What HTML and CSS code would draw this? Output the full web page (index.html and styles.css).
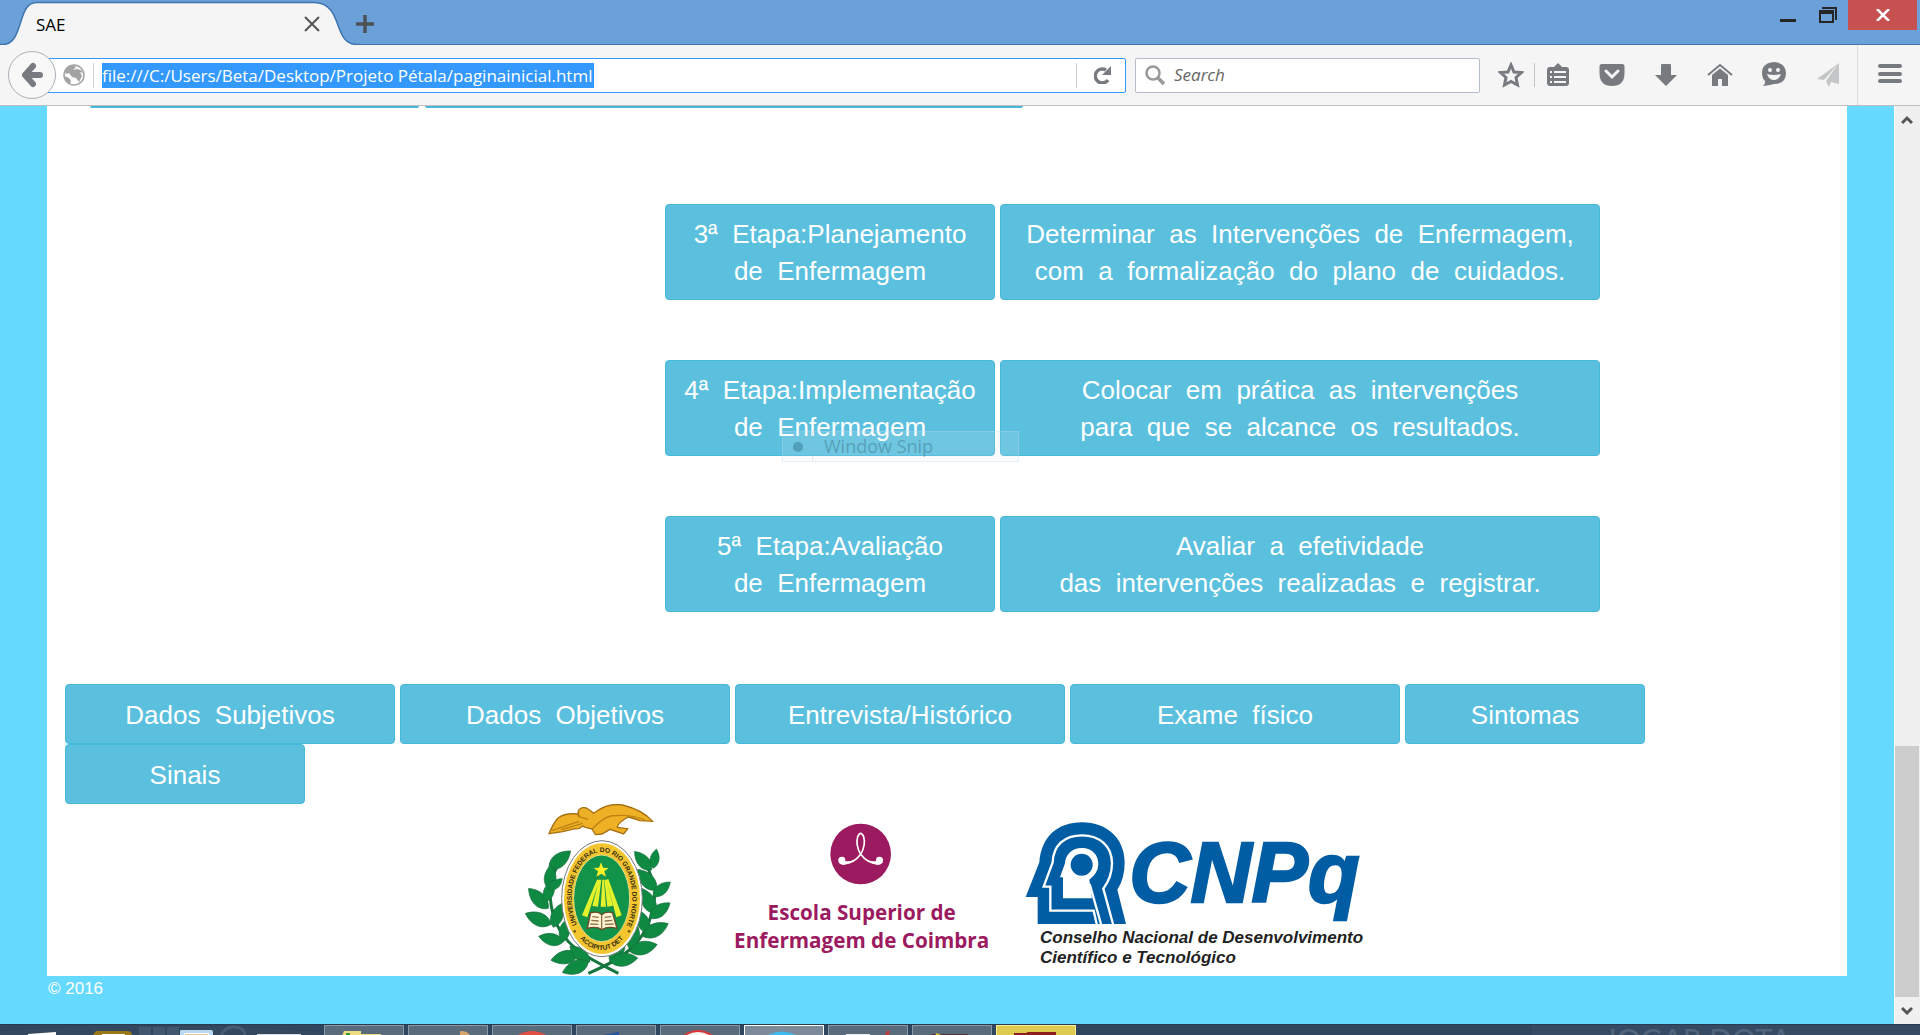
FILE: index.html
```html
<!DOCTYPE html>
<html lang="pt">
<head>
<meta charset="utf-8">
<title>SAE</title>
<link rel="stylesheet" href="styles.css">
</head>
<body>
<header class="titlebar">
  <div class="tab">
    <svg class="tab-shape" width="360" height="45" viewBox="0 0 360 45"><path d="M0 44.5H3C24 44 17 3 36 2.500H314C344 3 332 43 356 44.500V46H0Z" fill="#f5f5f5"/><path d="M0 44.500H3C24 44 17 3 36 2.500H314C344 3 332 43 356 44.500H360" fill="none" stroke="#3f74ad" stroke-width="1.500"/></svg>
    <span class="tab-title">SAE</span>
    <button class="plain tab-close" aria-label="Close tab"><svg width="16" height="16" viewBox="0 0 16 16"><path d="M1 1L15 15M15 1L1 15" stroke="#555" stroke-width="2"/></svg></button>
  </div>
  <button class="plain new-tab" aria-label="New tab"><svg width="18" height="18" viewBox="0 0 18 18"><path d="M9 0V18M0 9H18" stroke="#4d5257" stroke-width="3.500"/></svg></button>
  <div class="window-buttons">
    <button class="plain" aria-label="Minimize"><svg width="16" height="30" viewBox="0 0 16 30"><path d="M0 19H16V22H0Z" fill="#262626"/></svg></button>
    <button class="plain" aria-label="Restore"><svg width="18" height="30" viewBox="0 0 18 30"><path d="M3 7H18V20H16V9H3Z" fill="#262626"/><path d="M0 10H15V23H0ZM2 14V21H13V14Z" fill="#262626" fill-rule="evenodd"/></svg></button>
    <button class="plain window-close" aria-label="Close"><svg width="14" height="12" viewBox="0 0 14 12"><path d="M1 0L13 12M13 0L1 12" stroke="#fff" stroke-width="2.500"/></svg></button>
  </div>
</header>

<nav class="toolbar">
  <button class="plain back" aria-label="Back"><svg width="24" height="26" viewBox="0 0 24 26"><path d="M13 4L5 13L13 22M6 13H20" fill="none" stroke="#777b80" stroke-width="6" stroke-linejoin="round" stroke-linecap="round"/></svg></button>
  <div class="urlbar">
    <svg width="22" height="22" viewBox="0 0 22 22"><circle cx="11" cy="11" r="10" fill="#fff" stroke="#a3a3a3" stroke-width="1.500"/><path d="M2 7Q5 1 11 1L13 3L10 6L14 5L18 6L20 9L17 8L19 12L16 18L13 14L9 13L6 9L3 10ZM1 12L6 14L8 17L7 20Q2 17 1 12Z" fill="#a3a3a3"/></svg>
    <i class="url-divider"></i>
    <input class="url-text" aria-label="Address" value="file:///C:/Users/Beta/Desktop/Projeto Pétala/paginainicial.html">
    <button class="plain reload" aria-label="Reload"><svg width="18" height="18" viewBox="0 0 18 18"><path d="M14 14A7 7 0 1 1 12 4" fill="none" stroke="#777b80" stroke-width="3.500"/><path d="M17 0V9H8Z" fill="#777b80"/></svg></button>
  </div>
  <div class="searchbar">
    <svg width="21" height="21" viewBox="0 0 21 21"><circle cx="8" cy="8" r="6.500" fill="none" stroke="#999" stroke-width="2.500"/><path d="M12 12L19 19" stroke="#999" stroke-width="3.500"/></svg>
    <input class="search-text" aria-label="Search" placeholder="Search">
  </div>
  <div class="tools">
    <button class="plain" aria-label="Bookmark"><svg viewBox="0 0 26 26"><path d="M13 3L16 10L23.500 10.500L18 15.500L19.500 23L13 19.500L6.500 23L8 15.500L2.500 10.500L10 10Z" fill="none" stroke="#777b80" stroke-width="3"/></svg></button>
    <button class="plain" aria-label="Bookmarks list"><svg viewBox="0 0 26 26"><path d="M5 5H9L13 1L17 5H21Q24 5 24 8V21Q24 24 21 24H5Q2 24 2 21V8Q2 5 5 5Z" fill="#777b80"/><path d="M9 9H21V11H9ZM9 14H21V16H9ZM9 19H21V21H9ZM5 9H7V11H5ZM5 14H7V16H5ZM5 19H7V21H5Z" fill="#f5f5f5"/></svg></button>
    <button class="plain" aria-label="Pocket"><svg viewBox="0 0 26 26"><path d="M3 2H23Q25.500 2 25.500 4V11Q25.500 24 13 24Q.5 24 .5 11V4Q.5 2 3 2Z" fill="#777b80"/><path d="M7 9L13 15L19 9" fill="none" stroke="#f5f5f5" stroke-width="3" stroke-linecap="round"/></svg></button>
    <button class="plain" aria-label="Downloads"><svg viewBox="0 0 26 26"><path d="M8 3Q8 2 9 2H17Q18 2 18 3V13H24L13 24L2 13H8Z" fill="#777b80"/></svg></button>
    <button class="plain" aria-label="Home"><svg viewBox="0 0 26 26"><path d="M1 13L13 3L25 13" fill="none" stroke="#777b80" stroke-width="2"/><path d="M5 13L13 6.500L21 13V24H15V17H11V24H5Z" fill="#777b80"/></svg></button>
    <button class="plain" aria-label="Chat"><svg viewBox="0 0 26 26"><path d="M13 0Q25 1 25 11Q25 22 13 22Q10 23 2 24Q5 21 4 19Q1 16 1 11Q1 1 13 0Z" fill="#777b80"/><circle cx="9" cy="8" r="2" fill="#f5f5f5"/><circle cx="17" cy="8" r="2" fill="#f5f5f5"/><path d="M6 12Q13 14 20 12Q18 18 13 18Q8 18 6 12Z" fill="#f5f5f5"/></svg></button>
    <button class="plain" aria-label="Share"><svg viewBox="0 0 26 26"><path d="M24 1L2 17L9 18ZM24 1L11 19L14 25L16 20L24 22Z" fill="#c3c5c7"/></svg></button>
    <button class="plain menu" aria-label="Menu"><svg viewBox="0 0 26 26"><path d="M3 4H23M3 12H23M3 19H23" stroke="#777b80" stroke-width="4" stroke-linecap="round"/></svg></button>
  </div>
</nav>

<div class="viewport">
  <div class="page">
    <main class="sheet">
      <div class="cut-row"><i class="cut-label"></i><i class="cut-text"></i></div>
      <div class="steps">
        <div class="step"><button class="btn stage">3ª&nbsp; Etapa:Planejamento<br>de&nbsp; Enfermagem</button><button class="btn detail">Determinar&nbsp; as&nbsp; Intervenções&nbsp; de&nbsp; Enfermagem,<br>com&nbsp; a&nbsp; formalização&nbsp; do&nbsp; plano&nbsp; de&nbsp; cuidados.</button></div>
        <div class="step"><button class="btn stage">4ª&nbsp; Etapa:Implementação<br>de&nbsp; Enfermagem</button><button class="btn detail">Colocar&nbsp; em&nbsp; prática&nbsp; as&nbsp; intervenções<br>para&nbsp; que&nbsp; se&nbsp; alcance&nbsp; os&nbsp; resultados.</button>
          <div class="snip"><span class="snip-dot"></span><span class="snip-label">Window Snip</span></div>
        </div>
        <div class="step"><button class="btn stage">5ª&nbsp; Etapa:Avaliação<br>de&nbsp; Enfermagem</button><button class="btn detail">Avaliar&nbsp; a&nbsp; efetividade<br>das&nbsp; intervenções&nbsp; realizadas&nbsp; e&nbsp; registrar.</button></div>
      </div>
      <div class="topics">
        <button class="btn stage">Dados&nbsp; Subjetivos</button>
        <button class="btn stage">Dados&nbsp; Objetivos</button>
        <button class="btn stage">Entrevista/Histórico</button>
        <button class="btn stage">Exame&nbsp; físico</button>
        <button class="btn short">Sintomas</button>
        <button class="btn short">Sinais</button>
      </div>
      <div class="logos">
        <svg class="crest" width="180" height="172" viewBox="0 42 540 516" role="img" aria-label="Universidade Federal do Rio Grande do Norte">
          <defs>
            <path id="leaf" d="M0 0C14 -26 50 -32 84 -4C56 22 22 24 0 0Z"/>
            <path id="arc" d="M201 404A91 139 0 1 1 351 404"/>
            <path id="arc2" d="M200 432A104 156 0 0 0 350 432"/>
          </defs>
          <g fill="none" stroke="#17763d" stroke-width="9"><path d="M325 550C230 500 120 460 120 300Q125 240 170 190M235 550C330 510 430 460 435 300Q420 230 385 190"/></g>
          <g fill="#0f8a43" stroke="#176b3c" stroke-width="2">
            <use href="#leaf" transform="translate(118 238) rotate(-38)"/>
            <use href="#leaf" transform="translate(120 300) rotate(-85) scale(.9)"/>
            <use href="#leaf" transform="translate(115 355) rotate(-132)"/>
            <use href="#leaf" transform="translate(108 335) rotate(-70) scale(.8)"/>
            <use href="#leaf" transform="translate(124 402) rotate(-155)"/>
            <use href="#leaf" transform="translate(130 412) rotate(-68) scale(.9)"/>
            <use href="#leaf" transform="translate(160 455) rotate(-165) scale(.9)"/>
            <use href="#leaf" transform="translate(160 455) rotate(-80) scale(.8)"/>
            <use href="#leaf" transform="translate(205 492) rotate(170)"/>
            <use href="#leaf" transform="translate(240 515) rotate(-140) scale(.9)"/>
            <use href="#leaf" transform="translate(235 515) rotate(160)"/>
            <use href="#leaf" transform="translate(120 300) rotate(-40) scale(.6)"/>
            <use href="#leaf" transform="translate(425 240) rotate(-130) scale(.9)"/>
            <use href="#leaf" transform="translate(430 235) rotate(-78) scale(.7)"/>
            <use href="#leaf" transform="translate(440 300) rotate(-130)"/>
            <use href="#leaf" transform="translate(430 320) rotate(-38) scale(.8)"/>
            <use href="#leaf" transform="translate(435 370) rotate(-115)"/>
            <use href="#leaf" transform="translate(420 385) rotate(-35) scale(.9)"/>
            <use href="#leaf" transform="translate(415 430) rotate(-110) scale(.9)"/>
            <use href="#leaf" transform="translate(400 440) rotate(-25)"/>
            <use href="#leaf" transform="translate(360 478) rotate(-70) scale(.9)"/>
            <use href="#leaf" transform="translate(360 485) rotate(-12)"/>
            <use href="#leaf" transform="translate(300 515) rotate(-50) scale(.9)"/>
            <use href="#leaf" transform="translate(300 515) rotate(-5)"/>
          </g>
          <ellipse cx="276" cy="326" rx="121" ry="174" fill="#fff" stroke="#777" stroke-width="3"/>
          <ellipse cx="276" cy="326" rx="114" ry="166" fill="#f3c62f"/>
          <ellipse cx="275" cy="325" rx="84" ry="130" fill="#12934a" stroke="#e5d98d" stroke-width="3"/>
          <g class="crest-text"><text><textPath href="#arc">UNIVERSIDADE FEDERAL DO RIO GRANDE DO NORTE</textPath></text><text class="crest-motto"><textPath href="#arc2" startOffset="50%">ACCIPITUT DET</textPath></text></g>
          <circle cx="194" cy="424" r="4" fill="#725d16"/><circle cx="357" cy="424" r="4" fill="#725d16"/>
          <path d="M261 269L216 376L232 382L268 269ZM267 269L247 348L264 350L274 269ZM277 269L272 350H288L282 269ZM283 269L292 350L309 347L289 269ZM289 269L319 382L335 376L295 267Z" fill="#e2f12b"/>
          <path d="M273 217L279 233L296 234L283 244L288 260L274 251L259 260L264 244L251 234L267 233Z" fill="#fff028"/>
          <path d="M232 415L242 368Q265 363 275 374Q288 363 307 368L321 415Q292 408 276 419Q260 408 232 415Z" fill="#fff3d5" stroke="#6a4b25" stroke-width="4"/><path d="M275 375V416M247 380L266 382M244 391L266 393M241 402L265 403M284 382L303 380M284 393L307 391M285 403L311 402" stroke="#927145" stroke-width="4"/>
          <path d="M204 65Q210 49 229 54Q242 61 251 70Q292 37 338 45Q398 60 428 94L390 92Q375 86 354 81Q322 100 322 112L353 116L341 132L300 118L276 132L256 134L246 117Q222 112 218 108Q206 119 195 116L158 125L117 131Q128 103 144 84Q165 68 204 72L207 81Z" fill="#eeb125" stroke="#a77013" stroke-width="4"/><path d="M246 117Q280 82 303 78Q360 71 405 90M125 122L207 94M154 119L218 100M235 88L207 80" fill="none" stroke="#bd8114" stroke-width="4"/>
        </svg>
        <svg width="300" height="172" viewBox="0 12 900 516" role="img" aria-label="Escola Superior de Enfermagem de Coimbra">
          <circle cx="452" cy="162" r="91" fill="#9c1a60"/>
          <path d="M401 190Q430 192 452 163Q468 135 461 110Q452 90 443 110Q436 135 452 163Q474 192 503 190" fill="none" stroke="#fff" stroke-width="5"/>
          <path d="M385 184Q383 170 396 170Q407 170 406 183Q425 187 447 171Q420 194 400 195Q387 194 385 184ZM519 184Q521 170 508 170Q497 170 498 183Q479 187 457 171Q484 194 504 195Q517 194 519 184Z" fill="#fff"/>
          <text class="school-name" x="455" y="359">Escola Superior de</text>
          <text class="school-name" x="455" y="444">Enfermagem de Coimbra</text>
        </svg>
        <svg width="370" height="172" viewBox="0 -18 1110 516" role="img" aria-label="CNPq">
          <path d="M83 342V261H47L88 157C94 80 143 37 216 37C292 37 344 86 344 158Q344 205 322 239L348 342Z" fill="#005da4"/>
          <path d="M260 342L251 302H121V230H101L128 157C130 106 163 76 216 76C269 76 306 109 306 160Q306 202 280 236L309 342" fill="none" stroke="#fff" stroke-width="7"/>
          <path d="M159 265V202H150L165 160C167 132 186 114 216 114C247 114 265 135 265 163Q264 190 238 209L246 265Z" fill="#fff"/>
          <path d="M239 222L273 342" stroke="#fff" stroke-width="7"/>
          <circle cx="215" cy="164" r="33" fill="#005da4"/>
          <text class="cnpq-name" x="358" y="276">CNPq</text>
          <text class="cnpq-line" x="90" y="400">Conselho Nacional de Desenvolvimento</text>
          <text class="cnpq-line" x="90" y="459">Científico e Tecnológico</text>
        </svg>
      </div>
    </main>
    <footer class="copyright">© 2016</footer>
  </div>
  <div class="scrollbar">
    <button class="plain arrow" aria-label="Scroll up"><svg width="12" height="10" viewBox="0 0 12 10"><path d="M1 8L6 3L11 8" fill="none" stroke="#555" stroke-width="3"/></svg></button>
    <div class="track"><div class="thumb"></div></div>
    <button class="plain arrow" aria-label="Scroll down"><svg width="12" height="10" viewBox="0 0 12 10"><path d="M1 2L6 7L11 2" fill="none" stroke="#555" stroke-width="3"/></svg></button>
  </div>
</div>

<footer class="taskbar">
  <div class="pinned">
    <svg width="320" height="11" viewBox="0 0 320 11"><path d="M0 11V6Q160 -6 320 7V11" fill="#34495f"/><path d="M28 11V9L56 7V11Z" fill="#fff"/><path d="M92 11L96 6H127Q132 6 132 11Z" fill="#9a7817"/><path d="M102 11V9H125L124 11Z" fill="#fff"/><path d="M139 2H151V11H139ZM153 2H165V11H153ZM167 2H179V11H167Z" fill="#41566f"/><path d="M180 11V6Q180 5 182 5H211Q213 5 213 7V11Z" fill="#b9d9f2"/><path d="M184 8H209V11H184Z" fill="#fff"/><path d="M185 9H208V11H185Z" fill="#e4c994"/><path d="M221 11Q225 1 235 2Q245 3 245 11" fill="none" stroke="#475c75" stroke-width="3"/><path d="M257 9H301V11H257Z" fill="#d8dce2"/></svg>
  </div>
  <div class="tasks">
    <button class="plain task" aria-label="Explorer"><svg viewBox="0 0 80 10"><path d="M18 10L20 5H37V8H56L60 10Z" fill="#efdb80"/><path d="M22 7H26V10H22Z" fill="#2b9c37"/><path d="M37 9H41V10H37Z" fill="#d43724"/></svg></button>
    <button class="plain task" aria-label="Player"><svg viewBox="0 0 80 10"><path d="M52 5Q61 5 62 10H52Z" fill="#d9a46c"/></svg></button>
    <button class="plain task" aria-label="Browser"><svg viewBox="0 0 80 10"><path d="M24 10Q40 0 56 10Z" fill="#e04f40"/></svg></button>
    <button class="plain task" aria-label="Word"><svg viewBox="0 0 80 10"><path d="M22 10L43 6V10Z" fill="#2554a0"/></svg></button>
    <button class="plain task" aria-label="Snipping tool"><svg viewBox="0 0 80 10"><path d="M22 11Q38 -1 54 11Z" fill="#f5f5f5" stroke="#d8393d" stroke-width="2"/></svg></button>
    <button class="plain task active" aria-label="Firefox"><svg viewBox="0 0 80 10"><path d="M22 10Q38 1 54 10Z" fill="#3ebaf0"/></svg></button>
    <button class="plain task" aria-label="Notepad"><svg viewBox="0 0 80 10"><path d="M18 10V8H42V10Z" fill="#eee"/><path d="M58 10L61 5" stroke="#c43b3b" stroke-width="3"/></svg></button>
    <button class="plain task" aria-label="Archive"><svg viewBox="0 0 80 10"><path d="M18 8H56V10H24Z" fill="#5a2c36"/><path d="M24 8L29 10" stroke="#d9c728" stroke-width="2"/></svg></button>
    <button class="plain task alert" aria-label="Game"><svg viewBox="0 0 80 10"><path d="M18 10V7H30L32 6H60V10Z" fill="#8d1c1c"/></svg></button>
  </div>
  <div class="tray"><span class="wallpaper-text">JOGAR DOTA</span><span class="language">ENG</span></div>
</footer>
</body>
</html>
```
FILE: styles.css
```css
* { box-sizing: border-box; }
body {
  margin: 0;
  height: 100vh;
  overflow: hidden;
  display: flex;
  flex-direction: column;
  background: #66d9ff;
  font-family: "Open Sans", "Noto Sans", sans-serif;
  font-size: 17px;
}
svg { display: block; flex: none; }
.plain { border: 0; padding: 0; margin: 0; background: none; display: flex; align-items: center; justify-content: center; }

/* Window title bar */
.titlebar { flex: none; height: 45px; display: flex; background: #6ca0d8; border-bottom: 1px solid #4373a8; }
.tab { position: relative; width: 360px; height: 45px; display: flex; align-items: center; justify-content: space-between; padding: 3px 40px 0 36px; }
.tab-shape { position: absolute; left: 0; top: 0; }
.tab-title { position: relative; color: #000; }
.tab-close { position: relative; }
.new-tab { width: 10px; margin-top: 3px; height: 41px; }
.window-buttons { margin-left: auto; margin-right: 3px; height: 30px; display: flex; gap: 23px; }
.window-close { width: 69px; height: 30px; background: #c75050; margin-left: -12px; }

/* Navigation toolbar */
.toolbar { flex: none; height: 61px; display: flex; align-items: center; padding: 0 18px 0 8px; background: #f5f5f5; border-bottom: 1px solid #bfbfbf; }
.back { position: relative; z-index: 1; flex: none; width: 48px; height: 48px; border: 1px solid #a9b0b8; border-radius: 50%; background: #f8f8f8; }
.urlbar { flex: 1; height: 35px; display: flex; align-items: center; margin-left: -16px; padding: 0 13px 0 22px; border: 1px solid #3399ff; border-radius: 2px; background: #fff; }
.url-divider { width: 1px; height: 25px; margin: 0 8px; background: #d0d0d0; }
.url-text { width: 492px; height: 25px; border: 0; padding: 0; background: #3399ff; color: #fff; font: 17px/24px "Open Sans", sans-serif; }
.reload { margin-left: auto; height: 25px; padding-left: 17px; border-left: 1px solid #d0d0d0; }
.searchbar { flex: none; width: 345px; height: 35px; display: flex; align-items: center; gap: 8px; margin-left: 9px; padding: 0 9px; border: 1px solid #b4bdc9; border-radius: 2px; background: #fff; }
.search-text { flex: 1; min-width: 0; border: 0; padding: 0; background: none; font: italic 17px/24px "Open Sans", sans-serif; }
.search-text::placeholder { color: #666; opacity: 1; }
.tools { flex: none; height: 60px; display: flex; align-items: center; gap: 28px; margin-left: 18px; }
.tools svg { width: 26px; height: 26px; }
.tools button:first-child { width: 37px; height: 24px; margin-right: -18px; padding-right: 11px; border-right: 1px solid #c6c6c6; }
.menu { height: 60px; width: 45px; padding-left: 19px; margin-left: -12px; border-left: 1px solid #ddd; }

/* Scrolled page */
.viewport { flex: 1; min-height: 0; display: flex; background: #fff; overflow: hidden; }
.page { flex: 1; padding: 0 47px; background: #66d9ff; }
.sheet { padding: 0 18px; background: #fff; }
.cut-row { display: flex; gap: 6px; padding-left: 25px; height: 2px; }
.cut-label, .cut-text { height: 2px; background: #46b8da; border-radius: 0 0 3px 3px; }
.cut-label { width: 329px; }
.cut-text { width: 598px; }
.steps { display: flex; flex-direction: column; gap: 60px; padding: 96px 0 72px 600px; }
.step { position: relative; display: flex; gap: 5px; }
.btn {
  margin: 0;
  padding: 11px 10px 9px;
  border: 1px solid #46b8da;
  border-radius: 4px;
  background: #5bc0de;
  color: #fff;
  font: 26px/37px "Liberation Sans", Arial, sans-serif;
  white-space: nowrap;
}
.stage { width: 330px; }
.detail { width: 600px; }
.short { width: 240px; }
.topics { display: flex; flex-wrap: wrap; column-gap: 5px; }
.topics .btn { height: 60px; }
.snip { position: absolute; left: 117px; top: 71px; width: 237px; height: 31px; display: flex; align-items: center; border: 1px solid rgba(190, 215, 240, .3); background: rgba(225, 235, 245, .14); }
.snip-dot { width: 10px; height: 10px; margin: 0 9px 0 10px; border-radius: 50%; background: rgba(40, 100, 130, .4); }
.snip-label { border-left: 1px solid rgba(120, 190, 220, .25); padding-left: 11px; font-size: 18px; line-height: 29px; color: rgba(40, 80, 100, .34); }

/* Institution logos */
.logos { display: flex; justify-content: center; padding-right: 4px; }
.crest { margin-right: 20px; }
.crest-text { font: bold 20px "Liberation Sans", sans-serif; fill: #342c10; }
.crest-motto { text-anchor: middle; }
.school-name { font: bold 62px "Open Sans", sans-serif; fill: #9c1a60; text-anchor: middle; }
.cnpq-name { font: italic bold 254px "Liberation Sans", sans-serif; fill: #005da4; stroke: #005da4; stroke-width: 7px; }
.cnpq-line { font: italic bold 51px "Liberation Sans", sans-serif; fill: #222; }
.copyright { padding-left: 1px; color: #fff; font: 17px/25px "Liberation Sans", sans-serif; }

/* Scrollbar */
.scrollbar { flex: none; width: 26px; display: flex; flex-direction: column; padding-right: 1px; border-left: 1px solid #fff; background: #f0f0f0; }
.arrow { flex: none; height: 27px; }
.track { flex: 1; display: flex; flex-direction: column; justify-content: flex-end; }
.thumb { height: 29%; background: #cdcdcd; }

/* Taskbar */
.taskbar { flex: none; height: 11px; overflow: hidden; display: flex; background: #30455e; border-top: 1px solid #263a50; }
.pinned { width: 324px; }
.tasks { display: flex; gap: 4px; }
.task { width: 80px; height: 20px; border: 1px solid #8a98a8; background: #5a6b7c; align-items: flex-start; }
.task svg { width: 80px; height: 10px; }
.active { border-color: #fff; background: #7d8a99; }
.alert { border-color: #f8ee9a; background: #dfca50; }
.tray { flex: none; margin-left: auto; display: flex; width: 388px; height: 40px; padding-left: 72px; background: #364a63; }
.wallpaper-text { width: 158px; color: #50647c; font: 30px/28px Lato, sans-serif; white-space: nowrap; }
.language { color: #fff; font-size: 17px; line-height: 24px; padding-top: 4px; }
```
